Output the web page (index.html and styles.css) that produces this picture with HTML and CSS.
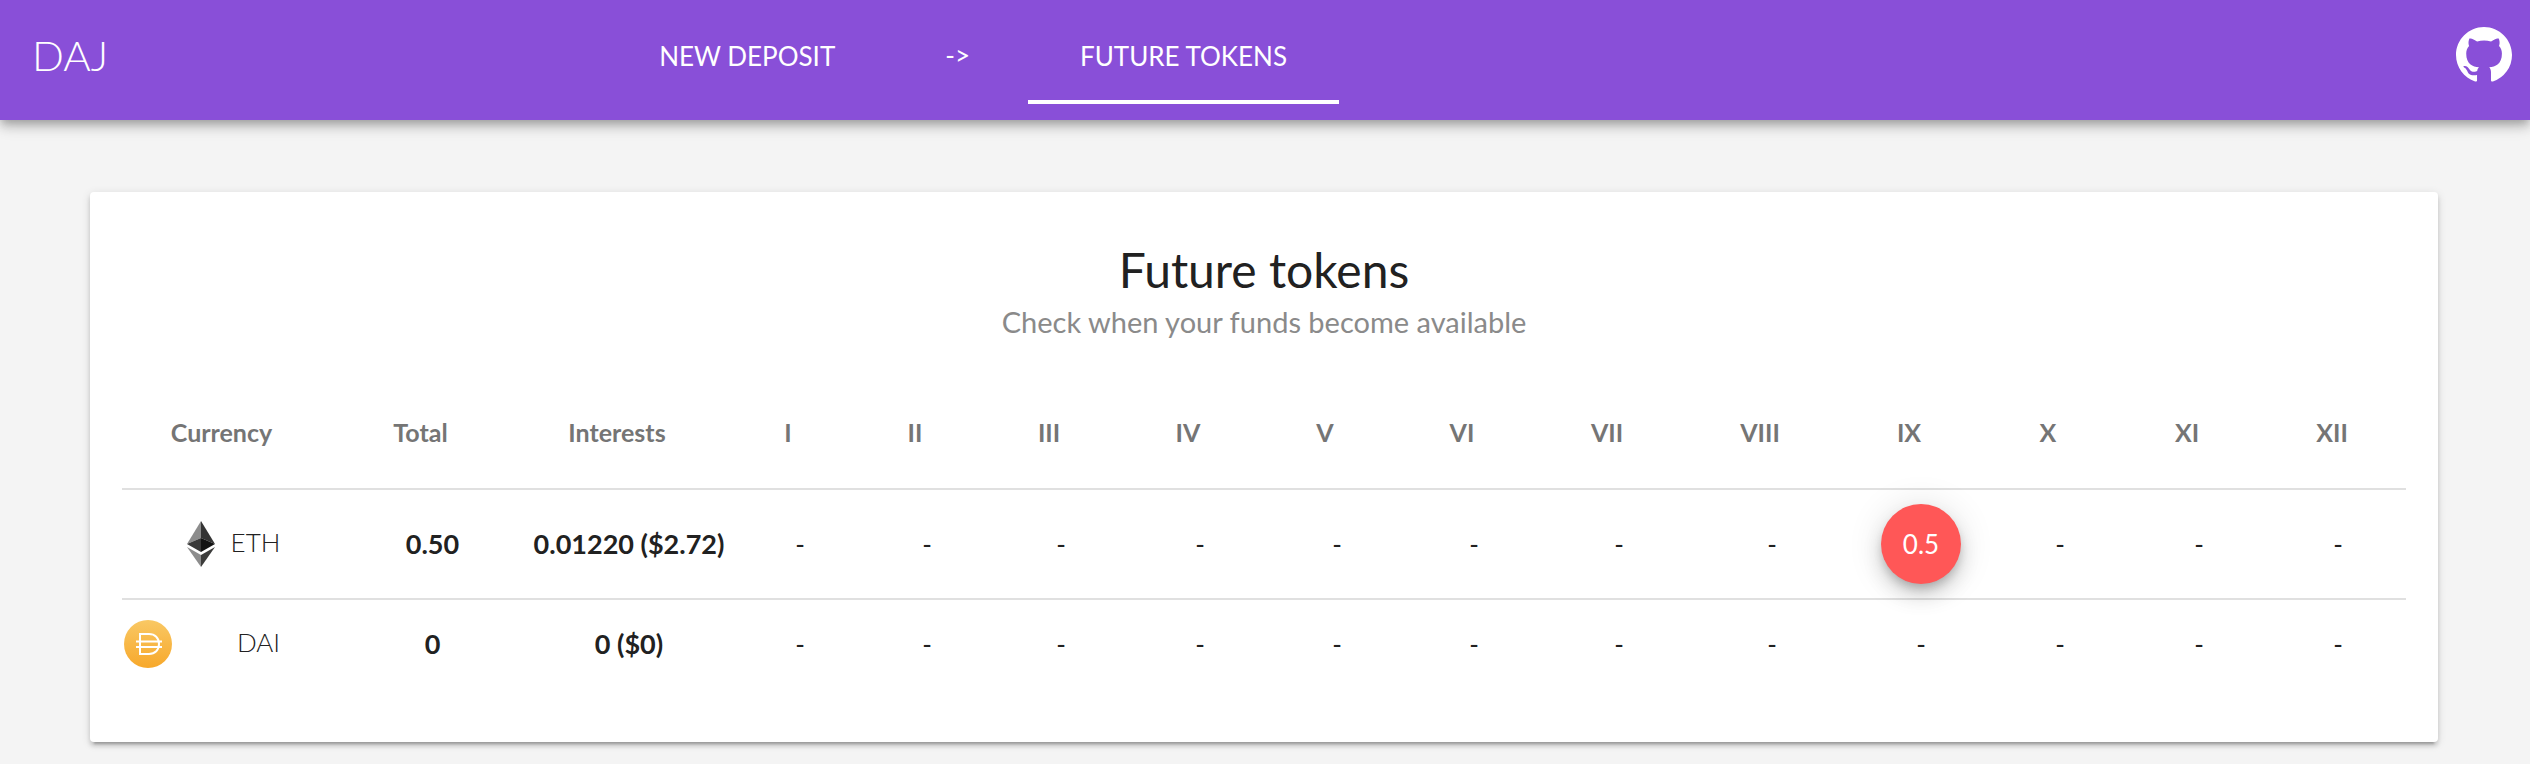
FILE: index.html
```html
<!DOCTYPE html>
<html lang="en">

<head>
  <meta charset="utf-8">
  <title>DAJ</title>
  <link rel="stylesheet" href="styles.css">
</head>

<body>
  <header class="topbar">
    <a class="logo" href="#">DAJ</a>
    <nav class="tabs">
      <a class="tab" href="#deposit">NEW DEPOSIT</a>
      <span class="arrow">-&gt;</span>
      <a class="tab active" href="#tokens" aria-current="page">FUTURE TOKENS</a>
    </nav>
    <a class="github" href="#github" aria-label="GitHub">
      <svg viewBox="0 0 16 16" width="56" height="56" fill="currentColor">
        <path d="M8 0C3.58 0 0 3.58 0 8c0 3.54 2.29 6.53 5.47 7.59.4.07.55-.17.55-.38 0-.19-.01-.82-.01-1.49-2.01.37-2.53-.49-2.69-.94-.09-.23-.48-.94-.82-1.13-.28-.15-.68-.52-.01-.53.63-.01 1.08.58 1.23.82.72 1.21 1.87.87 2.33.66.07-.52.28-.87.51-1.07-1.78-.2-3.64-.89-3.64-3.95 0-.87.31-1.59.82-2.15-.08-.2-.36-1.02.08-2.12 0 0 .67-.21 2.2.82.64-.18 1.32-.27 2-.27s1.36.09 2 .27c1.53-1.04 2.2-.82 2.2-.82.44 1.1.16 1.92.08 2.12.51.56.82 1.27.82 2.15 0 3.07-1.87 3.75-3.65 3.95.29.25.54.73.54 1.48 0 1.07-.01 1.93-.01 2.2 0 .21.15.46.55.38A8.01 8.01 0 0 0 16 8c0-4.42-3.58-8-8-8z"/>
      </svg>
    </a>
  </header>

  <main class="card">
    <h1>Future tokens</h1>
    <p class="subtitle">Check when your funds become available</p>
    <table>
      <colgroup>
        <col class="c-currency">
        <col class="c-total">
        <col class="c-interests">
        <col class="c-1">
        <col class="c-2">
        <col class="c-3">
        <col class="c-4">
        <col class="c-5">
        <col class="c-6">
        <col class="c-7">
        <col class="c-8">
        <col class="c-9">
        <col class="c-10">
        <col class="c-11">
        <col class="c-12">
      </colgroup>
      <thead>
        <tr>
          <th>Currency</th>
          <th>Total</th>
          <th>Interests</th>
          <th>I</th>
          <th>II</th>
          <th>III</th>
          <th>IV</th>
          <th>V</th>
          <th>VI</th>
          <th>VII</th>
          <th>VIII</th>
          <th>IX</th>
          <th>X</th>
          <th>XI</th>
          <th class="last">XII</th>
        </tr>
      </thead>
      <tbody>
        <tr class="eth">
          <td>
            <div class="currency">
              <svg viewBox="0 0 28 46" width="28" height="46">
                <path fill="#8c8c8c" d="M14 0L0 23l14-6z"/>
                <path fill="#343434" d="M14 0l14 23-14-6z"/>
                <path fill="#393939" d="M14 17L0 23l14 8z"/>
                <path fill="#141414" d="M14 17l14 6-14 8z"/>
                <path fill="#8c8c8c" d="M0 26l14 8v12z"/>
                <path fill="#3c3c3b" d="M28 26l-14 8v12z"/>
              </svg>
              <span>ETH</span>
            </div>
          </td>
          <td class="amount">0.50</td>
          <td class="amount">0.01220 ($2.72)</td>
          <td>-</td>
          <td>-</td>
          <td>-</td>
          <td>-</td>
          <td>-</td>
          <td>-</td>
          <td>-</td>
          <td>-</td>
          <td><button class="token" type="button">0.5</button></td>
          <td>-</td>
          <td>-</td>
          <td>-</td>
        </tr>
        <tr class="dai">
          <td>
            <div class="currency">
              <svg viewBox="0 0 48 48" width="48" height="48">
                <defs>
                  <linearGradient id="gold" x1="0" y1="0" x2="0" y2="1">
                    <stop offset="0" stop-color="#f9c864"/>
                    <stop offset="1" stop-color="#f7a82b"/>
                  </linearGradient>
                </defs>
                <circle cx="24" cy="24" r="24" fill="url(#gold)"/>
                <path fill="none" stroke="#fff" stroke-width="2" d="M16 14h9c6 0 10 4 10 10s-4 10-10 10h-9zM12 21.500h26M12 27h26"/>
              </svg>
              <span>DAI</span>
            </div>
          </td>
          <td class="amount">0</td>
          <td class="amount">0 ($0)</td>
          <td>-</td>
          <td>-</td>
          <td>-</td>
          <td>-</td>
          <td>-</td>
          <td>-</td>
          <td>-</td>
          <td>-</td>
          <td>-</td>
          <td>-</td>
          <td>-</td>
          <td>-</td>
        </tr>
      </tbody>
    </table>
  </main>
</body>

</html>
```
FILE: styles.css
```css
body {
  box-sizing: border-box;
  min-height: 100vh;
  margin: 0;
  padding-bottom: 20px;
  background: #f4f4f4;
  color: #212121;
  font: 26px/32px "Avenir Next", Avenir, Lato, sans-serif;
}

.topbar {
  box-sizing: border-box;
  display: grid;
  grid-template-columns: 24% 1fr auto;
  align-items: center;
  height: 120px;
  padding-bottom: 10px;
  background: #894fd8;
  color: #fff;
  box-shadow: 0 4px 8px -2px rgba(0, 0, 0, .2), 0 8px 10px rgba(0, 0, 0, .14), 0 2px 20px rgba(0, 0, 0, .12);
}

.topbar a {
  color: inherit;
  text-decoration: none;
}

.logo {
  padding-left: 32px;
  font-size: 42px;
  line-height: 48px;
  font-weight: 300;
}

.tabs {
  display: flex;
  align-items: center;
}

.tab {
  margin-top: 6px;
  padding: 28px 52px;
  border-bottom: 4px solid transparent;
}

.tab.active {
  border-color: #fff;
}

.arrow {
  padding: 0 58px;
}

.github {
  display: flex;
  margin-right: 18px;
}

.card {
  margin: 72px 92px 0 90px;
  padding: 48px 32px 54px;
  background: #fff;
  border-radius: 4px;
  text-align: center;
  box-shadow: 0 6px 2px -4px rgba(0, 0, 0, .2), 0 4px 4px rgba(0, 0, 0, .14), 0 2px 10px rgba(0, 0, 0, .12);
}

h1 {
  margin: 0;
  font-size: 48px;
  line-height: 60px;
  font-weight: 400;
}

.subtitle {
  margin: 4px 0 40px;
  color: #8a8a8a;
  font-size: 29px;
  line-height: 36px;
}

table {
  width: 100%;
  table-layout: fixed;
  border-collapse: separate;
  border-spacing: 0;
}

th {
  height: 104px;
  padding: 0 24px 4px 0;
  border-bottom: 2px solid #e0e0e0;
  color: #757575;
  font-size: 25px;
  font-weight: 700;
}

th.last {
  padding-right: 12px;
}

td {
  padding: 0;
}

.eth td {
  height: 108px;
  border-bottom: 2px solid #e0e0e0;
}

.dai td {
  height: 88px;
}

.amount {
  font-size: 27px;
  font-weight: 700;
}

.currency {
  display: flex;
  align-items: center;
  justify-content: center;
  gap: 16px;
  font-weight: 300;
}

.currency span {
  padding-bottom: 4px;
}

.dai .currency {
  gap: 0;
  padding-left: 2px;
}

.dai .currency span {
  flex: 1;
}

.token {
  width: 80px;
  height: 80px;
  padding: 0;
  border: 0;
  border-radius: 50%;
  background: #ff5757;
  color: #fff;
  font: inherit;
  cursor: pointer;
  vertical-align: middle;
  box-shadow: 0 6px 10px -2px rgba(0, 0, 0, .2), 0 12px 20px rgba(0, 0, 0, .14), 0 2px 36px rgba(0, 0, 0, .12);
}

.c-currency {
  width: 223px;
}

.c-total {
  width: 175px;
}

.c-interests {
  width: 218px;
}

.c-1 {
  width: 124px;
}

.c-2 {
  width: 130px;
}

.c-3 {
  width: 138px;
}

.c-4,
.c-6 {
  width: 140px;
}

.c-5 {
  width: 134px;
}

.c-7 {
  width: 150px;
}

.c-8 {
  width: 156px;
}

.c-9,
.c-11 {
  width: 142px;
}

.c-10,
.c-12 {
  width: 136px;
}
```
